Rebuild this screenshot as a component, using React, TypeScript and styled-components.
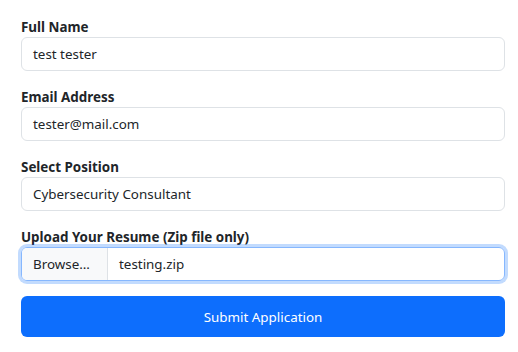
import styled, { createGlobalStyle } from "styled-components";

const GlobalStyle = createGlobalStyle`
  body {
    margin: 0;
    background: #ffffff;
    font-family: "Noto Sans", "Open Sans", sans-serif;
    color: #212529;
  }
`;

const Form = styled.form`
  width: 484px;
  padding: 16px 0 0 21px;
  display: flex;
  flex-direction: column;
`;

const Group = styled.div`
  display: flex;
  flex-direction: column;
  margin-bottom: 15px;
`;

const Label = styled.label`
  display: block;
  height: 21px;
  padding-top: 1px;
  box-sizing: border-box;
  font-size: 13.4px;
  font-weight: 700;
  line-height: 21px;
`;

const Field = styled.div`
  height: 34px;
  box-sizing: border-box;
  border: 1px solid #dee2e6;
  border-radius: 6px;
  display: flex;
  align-items: center;
  padding: 0 11px;
  font-size: 13.4px;
  background: #ffffff;
`;

const FileField = styled.div`
  height: 34px;
  box-sizing: border-box;
  border: 1px solid #86b7fe;
  border-radius: 6px;
  box-shadow: 0 0 0 3px rgba(13, 110, 253, 0.25);
  display: flex;
  align-items: stretch;
  font-size: 13.4px;
  overflow: hidden;
`;

const Browse = styled.div`
  background: #f8f9fa;
  border-right: 1px solid #dee2e6;
  display: flex;
  align-items: center;
  padding: 0 11px;
  width: 63px;
`;

const FileName = styled.div`
  display: flex;
  align-items: center;
  padding: 0 11px;
`;

const Submit = styled.button`
  height: 41px;
  border: none;
  border-radius: 6px;
  background: #0d6efd;
  color: #ffffff;
  font-family: "Noto Sans", "Open Sans", sans-serif;
  font-size: 13.4px;
`;

const fields = [
  { label: "Full Name", value: "test tester" },
  { label: "Email Address", value: "tester@mail.com" },
  { label: "Select Position", value: "Cybersecurity Consultant" },
];

export default function App() {
  return (
    <>
      <GlobalStyle />
      <Form onSubmit={(e) => e.preventDefault()}>
        {fields.map((f) => (
          <Group key={f.label}>
            <Label>{f.label}</Label>
            <Field>{f.value}</Field>
          </Group>
        ))}
        <Group>
          <Label>Upload Your Resume (Zip file only)</Label>
          <FileField>
            <Browse>Browse…</Browse>
            <FileName>testing.zip</FileName>
          </FileField>
        </Group>
        <Submit type="submit">Submit Application</Submit>
      </Form>
    </>
  );
}
